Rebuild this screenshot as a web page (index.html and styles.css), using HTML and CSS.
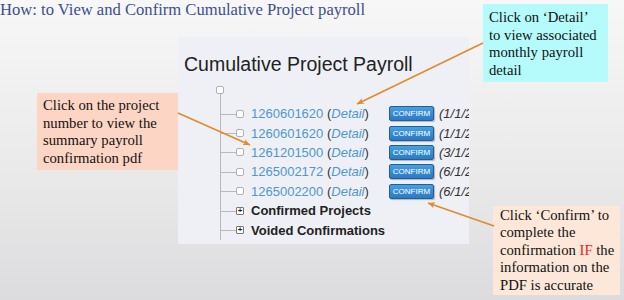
FILE: index.html
```html
<!DOCTYPE html>
<html>
<head>
	<meta charset="utf-8">
	<title>Cumulative Project Payroll</title>
	<link rel="stylesheet" href="styles.css">
</head>
<body>
	<div class="slide">
		<h1 class="slide-title">How: to View and Confirm Cumulative Project payroll</h1>

		<div class="panel">
			<h2>Cumulative Project Payroll</h2>
			<div class="tree">
				<span class="cb root-cb"></span>
				<ul class="branch">
					<li><span class="cb"></span><span class="proj"><a href="javascript:;">1260601620</a> (<a href="javascript:;" class="detail">Detail</a>)</span><a href="javascript:;" class="btn">CONFIRM</a><span class="date">(1/1/2</span></li>
					<li><span class="cb"></span><span class="proj"><a href="javascript:;">1260601620</a> (<a href="javascript:;" class="detail">Detail</a>)</span><a href="javascript:;" class="btn">CONFIRM</a><span class="date">(1/1/2</span></li>
					<li><span class="cb"></span><span class="proj"><a href="javascript:;">1261201500</a> (<a href="javascript:;" class="detail">Detail</a>)</span><a href="javascript:;" class="btn">CONFIRM</a><span class="date">(3/1/2</span></li>
					<li><span class="cb"></span><span class="proj"><a href="javascript:;">1265002172</a> (<a href="javascript:;" class="detail">Detail</a>)</span><a href="javascript:;" class="btn">CONFIRM</a><span class="date">(6/1/2</span></li>
					<li><span class="cb"></span><span class="proj"><a href="javascript:;">1265002200</a> (<a href="javascript:;" class="detail">Detail</a>)</span><a href="javascript:;" class="btn">CONFIRM</a><span class="date">(6/1/2</span></li>
					<li class="group"><span class="plus">+</span><b>Confirmed Projects</b></li>
					<li class="group"><span class="plus">+</span><b>Voided Confirmations</b></li>
				</ul>
			</div>
		</div>

		<div class="note note-left">Click on the project number to view the summary payroll confirmation pdf</div>
		<div class="note note-top">Click on &lsquo;Detail&rsquo; to view associated monthly payroll detail</div>
		<div class="note note-bottom">Click &lsquo;Confirm&rsquo; to complete the confirmation <span class="red">IF</span> the information on the PDF is accurate</div>

		<!-- callout arrows -->
		<svg class="arrows" width="624" height="300" viewBox="0 0 624 300">
			<defs>
				<marker id="head" markerWidth="8" markerHeight="8" refX="7" refY="4" orient="auto" markerUnits="userSpaceOnUse">
					<path d="M0 0.8 L7 4 L0 7.2 L2 4 Z" fill="#e5892a"/>
				</marker>
			</defs>
			<line x1="178" y1="113" x2="250" y2="145" marker-end="url(#head)"/>
			<line x1="483" y1="43" x2="357" y2="104" marker-end="url(#head)"/>
			<line x1="494" y1="226" x2="428" y2="203" marker-end="url(#head)"/>
		</svg>
	</div>
</body>
</html>
```

FILE: styles.css
```css
*{box-sizing: border-box;}
body{margin: 0;}
a{text-decoration: none;}
ul{list-style: none;margin: 0;padding: 0;}

.slide{width: 624px;height: 300px;position: relative;overflow: hidden;background: linear-gradient(#f7f7f8, #e9e9ea 60%, #dcdcde);}
.slide-title{margin: 0;font: normal 16.6px/20px "Liberation Serif", serif;color: #3d4f8e;}

.panel{margin: 17px 0 0 178px;width: 291px;height: 207px;background: #eef0f5;overflow: hidden;font-family: "Liberation Sans", Arial, sans-serif;}
.panel h2{margin: 16px 0 0 6px;font-weight: normal;font-size: 19.5px;line-height: 22px;color: #222;white-space: nowrap;}

.tree{margin: 11px 0 0 38px;}
.cb{display: block;width: 8px;height: 8px;border: 1px solid #b0b0b0;border-radius: 2px;background: #fff;flex: none;}
.branch{margin-left: 4px;padding-top: 10px;border-left: 1px solid #b9b9b9;}
.branch li{display: flex;align-items: center;height: 19.4px;padding-left: 15px;position: relative;white-space: nowrap;font-size: 13px;color: #333;}
.branch li:before{content: "";position: absolute;left: 0;top: 50%;width: 15px;border-top: 1px solid #b9b9b9;}
.branch .cb{margin-right: 7px;}
.proj{width: 138px;flex: none;}
.proj a{color: #4f97d0;}
.proj .detail{font-style: italic;}
.btn{display: block;flex: none;width: 45px;height: 15px;border: 1px solid #1f5f9c;border-radius: 2px;background: linear-gradient(#45a0e2, #2c7ac2);color: #fff;font-size: 8px;line-height: 13px;text-align: center;box-shadow: 1px 1px 1px rgba(0,0,0,0.25);}
.date{margin-left: 5px;font-style: italic;color: #333;}

.group b{color: #222;font-size: 13px;}
.plus{display: block;flex: none;width: 8px;height: 8px;margin-right: 7px;border: 1px solid #777;border-radius: 1px;background: #fff;font: bold 8px/6px "Liberation Sans", Arial, sans-serif;text-align: center;color: #222;}

.note{position: absolute;font: 14.7px/17.5px "Liberation Serif", serif;color: #111;}
.note-left{left: 37px;top: 93px;width: 141px;height: 77px;padding: 4px 0 0 6px;background: #fdd5c4;}
.note-top{left: 483px;top: 4px;width: 125px;height: 78px;padding: 5px 8px 0 6px;background: #b5fbfb;}
.note-bottom{left: 493px;top: 206px;width: 127px;height: 89px;padding: 0.5px 0 0 7px;background: #fce7d8;}
.red{color: #f01c1c;}

.arrows{position: absolute;left: 0;top: 0;pointer-events: none;}
.arrows line{stroke: #e5892a;stroke-width: 1.6;}
```
